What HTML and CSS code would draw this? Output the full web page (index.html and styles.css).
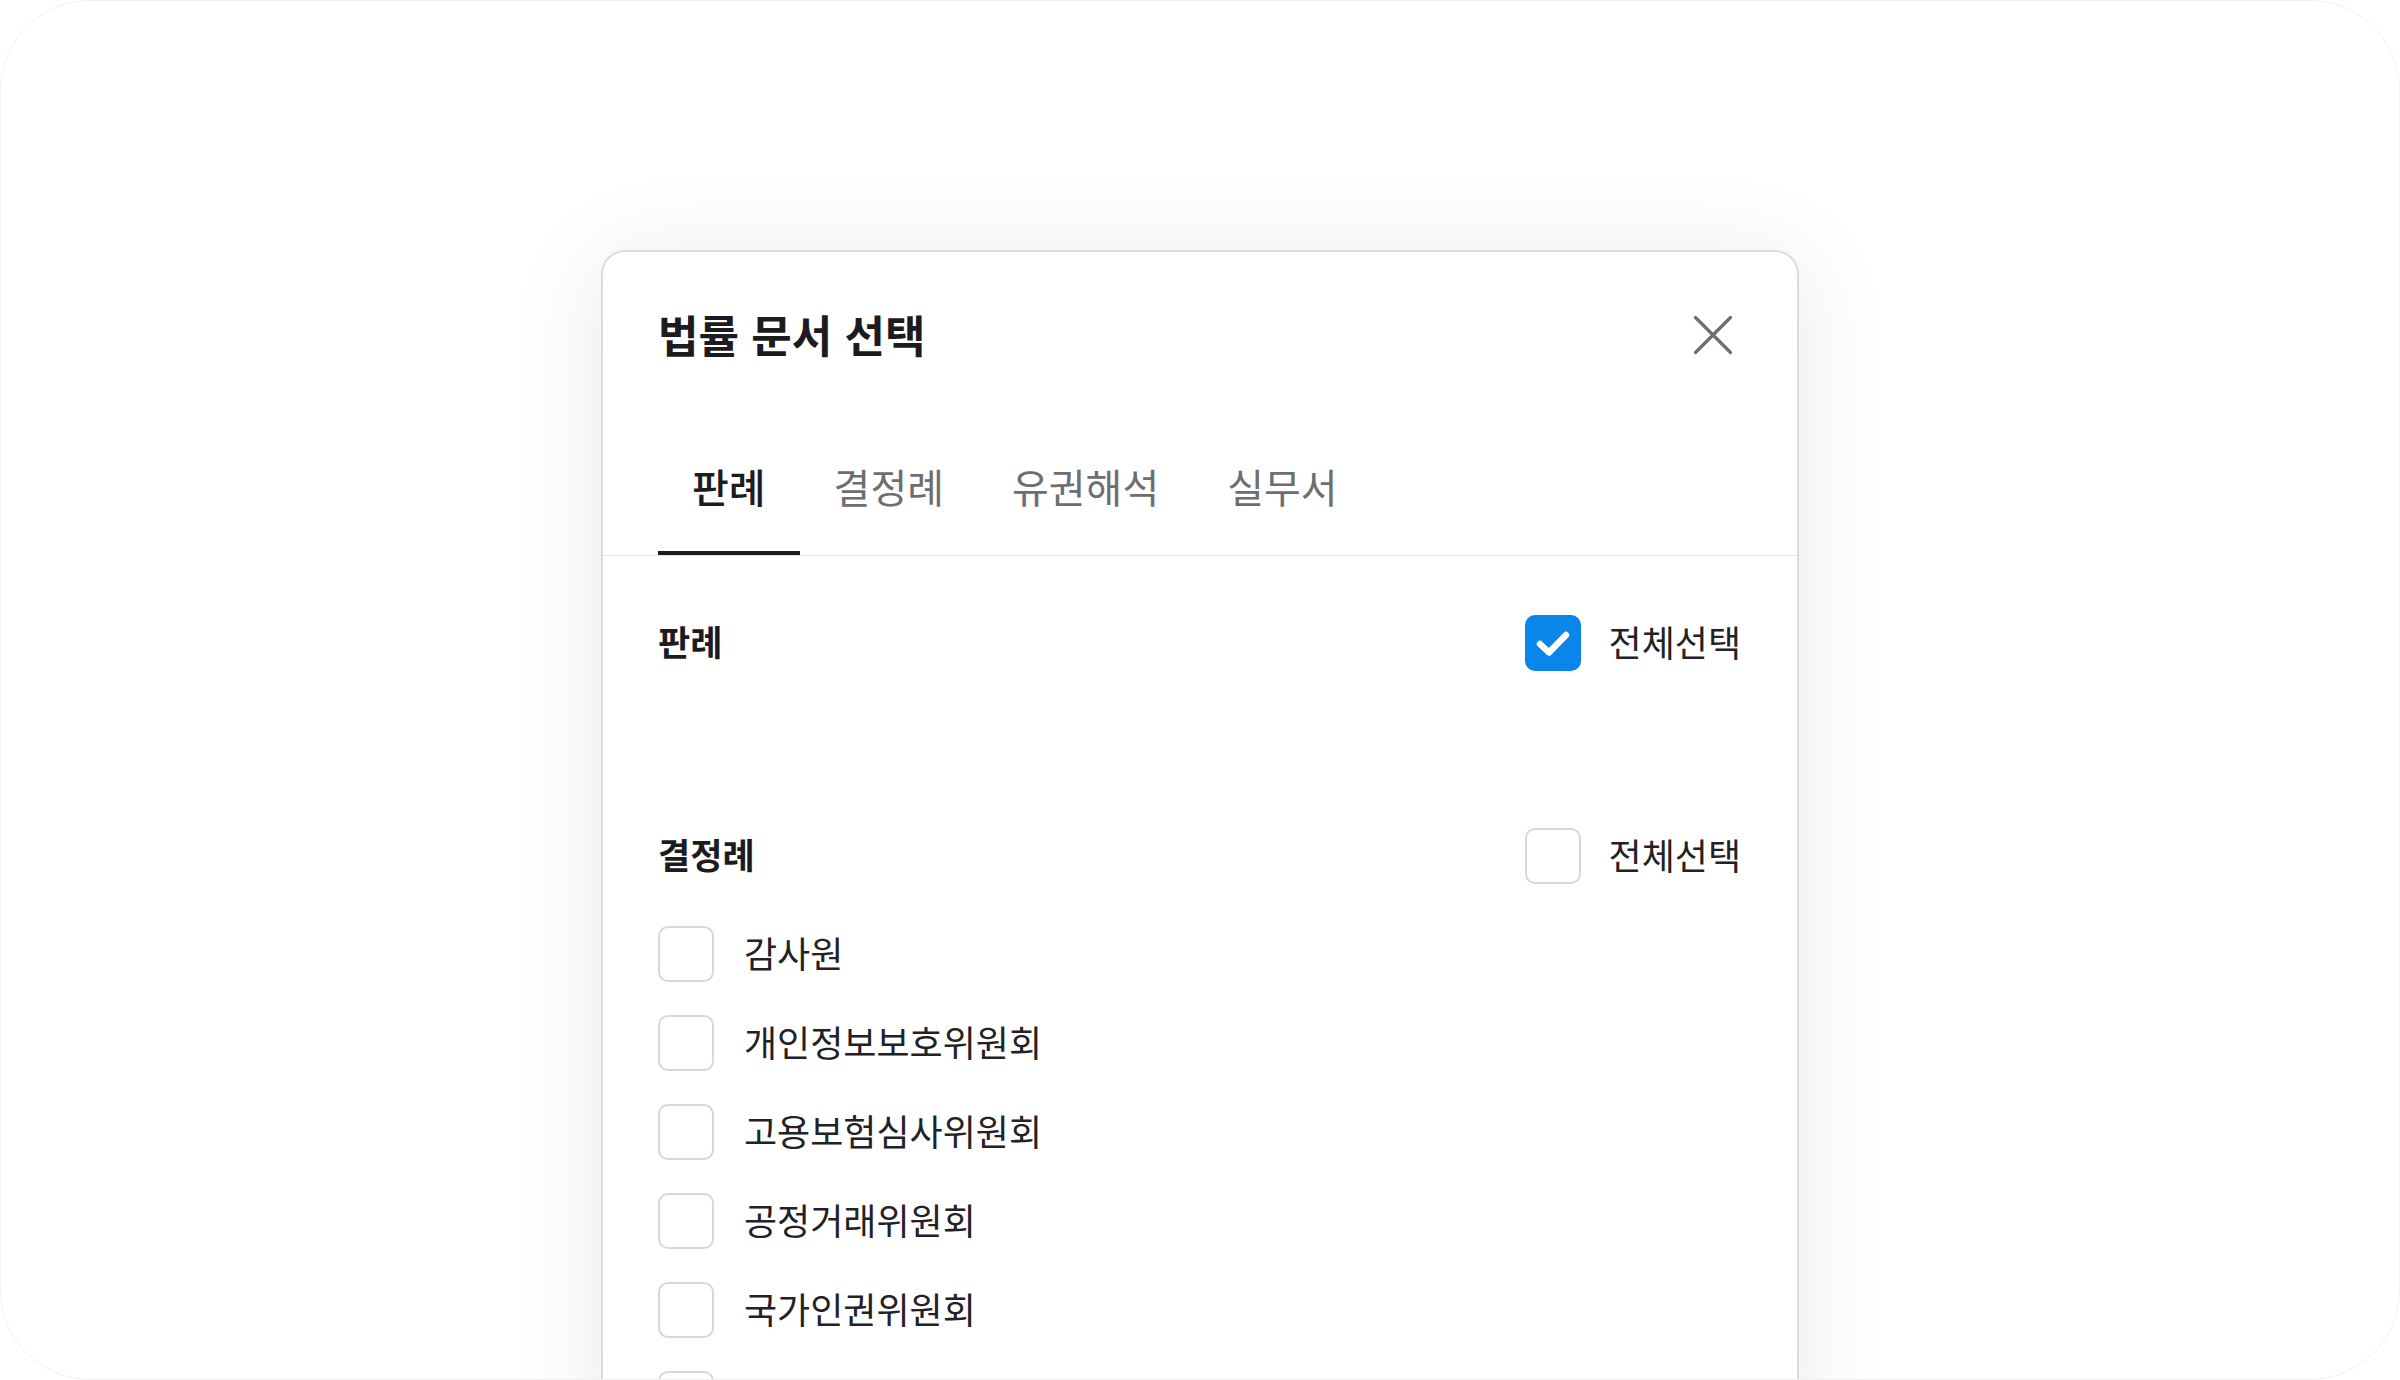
FILE: index.html
```html
<!DOCTYPE html>
<html lang="ko">
<head>
<meta charset="utf-8">
<title>법률 문서 선택</title>
<link rel="stylesheet" href="styles.css">
</head>
<body>
<div class="frame">
  <section class="modal" role="dialog" aria-labelledby="modal-title">
    <header class="modal-header">
      <h1 id="modal-title" class="modal-title">법률 문서 선택</h1>
      <button class="close-btn" type="button" aria-label="닫기">
        <svg viewBox="0 0 40 40" width="40" height="40" aria-hidden="true">
          <path d="M2.5 2.5 L37.5 37.5 M37.5 2.5 L2.5 37.5" fill="none" stroke="#6e6e73" stroke-width="3.2" stroke-linecap="round"/>
        </svg>
      </button>
    </header>

    <nav class="tabs">
      <button class="tab is-active" type="button">판례</button>
      <button class="tab" type="button">결정례</button>
      <button class="tab" type="button">유권해석</button>
      <button class="tab" type="button">실무서</button>
    </nav>

    <div class="modal-body">
      <div class="group">
        <div class="group-head">
          <span class="group-title">판례</span>
          <label class="check-row check-all">
            <span class="box is-checked">
              <svg viewBox="0 0 56 56" width="56" height="56" aria-hidden="true">
                <path d="M15 29 L24 37.5 L41 20" fill="none" stroke="#fff" stroke-width="6.5" stroke-linecap="round" stroke-linejoin="round"/>
              </svg>
            </span>
            <span class="check-text">전체선택</span>
          </label>
        </div>
      </div>

      <div class="group">
        <div class="group-head">
          <span class="group-title">결정례</span>
          <label class="check-row check-all">
            <span class="box"></span>
            <span class="check-text">전체선택</span>
          </label>
        </div>
        <ul class="item-list">
          <li class="check-row"><span class="box"></span><span class="check-text">감사원</span></li>
          <li class="check-row"><span class="box"></span><span class="check-text">개인정보보호위원회</span></li>
          <li class="check-row"><span class="box"></span><span class="check-text">고용보험심사위원회</span></li>
          <li class="check-row"><span class="box"></span><span class="check-text">공정거래위원회</span></li>
          <li class="check-row"><span class="box"></span><span class="check-text">국가인권위원회</span></li>
          <li class="check-row"><span class="box"></span><span class="check-text">국민권익위원회</span></li>
        </ul>
      </div>
    </div>
  </section>
</div>
</body>
</html>
```

FILE: styles.css
```css
* {
  box-sizing: border-box;
}

html,
body {
  margin: 0;
  padding: 0;
  background: #ffffff;
}

body {
  font-family: "Noto Sans CJK KR", "Noto Sans", sans-serif;
  color: #1f1f22;
}

/* rounded page canvas */
.frame {
  width: 2400px;
  height: 1380px;
  border: 1px solid #f1f1f1;
  border-radius: 90px;
  overflow: hidden;
  background: #ffffff;
  display: flex;
  justify-content: center;
  align-items: flex-start;
  padding-top: 249px;
}

/* dialog */
.modal {
  flex-shrink: 0;
  width: 1198px;
  background: #ffffff;
  border: 2px solid #dcdcdc;
  border-radius: 24px;
  box-shadow: 0 10px 100px rgba(0, 0, 0, 0.09);
}

.modal-header {
  height: 169px;
  padding: 35px 60px 38px 55px;
  display: flex;
  align-items: center;
  justify-content: space-between;
}

.modal-title {
  margin: 0;
  padding-bottom: 3px;
  font-size: 44px;
  font-weight: 700;
  line-height: 1;
  color: #1c1c1f;
}

.close-btn {
  width: 48px;
  height: 48px;
  padding: 0;
  border: 0;
  background: transparent;
  display: flex;
  align-items: center;
  justify-content: center;
  cursor: pointer;
}

/* tab bar */
.tabs {
  display: flex;
  padding: 0 55px;
  border-bottom: 1px solid #e6e6e6;
}

.tab {
  position: relative;
  height: 134px;
  padding: 0 34px 5px;
  border: 0;
  background: transparent;
  font-family: inherit;
  font-size: 40px;
  font-weight: 400;
  line-height: 1;
  color: #6d6d72;
  cursor: pointer;
}

.tab.is-active {
  color: #1c1c1f;
  font-weight: 500;
}

.tab.is-active::after {
  content: "";
  position: absolute;
  left: 0;
  right: 0;
  bottom: 0;
  height: 4px;
  background: #1c1c1f;
}

/* body */
.modal-body {
  padding: 59px 56px 0 55px;
  display: flex;
  flex-direction: column;
  gap: 157px;
}

.group-head {
  display: flex;
  align-items: center;
  justify-content: space-between;
  height: 56px;
}

.group-title {
  padding-bottom: 5px;
  font-size: 35px;
  font-weight: 700;
  line-height: 1;
  color: #1c1c1f;
}

.check-row {
  display: flex;
  align-items: center;
  gap: 30px;
  cursor: pointer;
}

.check-all {
  gap: 28px;
}

.box {
  flex-shrink: 0;
  width: 56px;
  height: 56px;
  border: 2px solid #d8d8d8;
  border-radius: 10px;
  background: #ffffff;
  display: flex;
  align-items: center;
  justify-content: center;
}

.box.is-checked {
  border: 0;
  background: #0a86ea;
}

.check-text {
  padding-bottom: 5px;
  font-size: 36px;
  line-height: 1;
  color: #222226;
}

.item-list {
  list-style: none;
  margin: 0;
  padding: 42px 0 0;
  display: flex;
  flex-direction: column;
  gap: 33px;
}

.item-list .check-row {
  height: 56px;
}
```
